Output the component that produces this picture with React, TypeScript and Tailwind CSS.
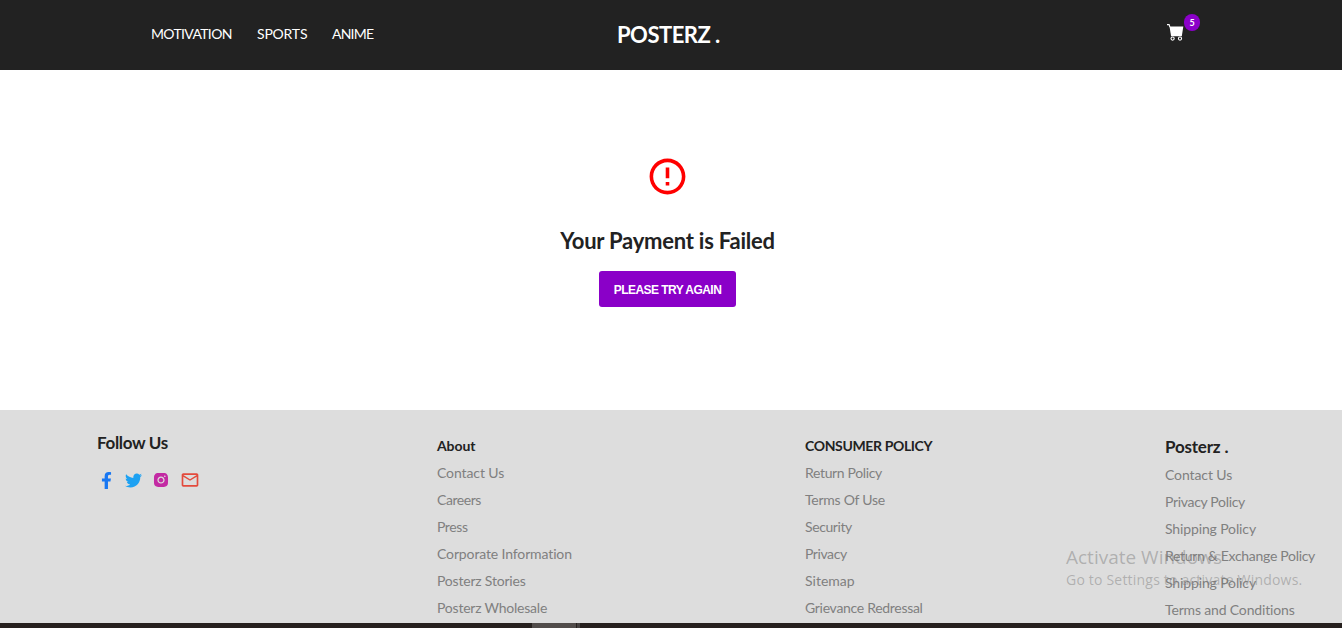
import { FaFacebookF, FaTwitter } from "react-icons/fa";
import { AiFillInstagram } from "react-icons/ai";
import { MdErrorOutline, MdMailOutline } from "react-icons/md";

type Item = { label: string; tracking: string };

const about: Item[] = [
  { label: "Contact Us", tracking: "tracking-[-0.1px]" },
  { label: "Careers", tracking: "tracking-[-0.45px]" },
  { label: "Press", tracking: "tracking-[-0.4px]" },
  { label: "Corporate Information", tracking: "tracking-[-0.13px]" },
  { label: "Posterz Stories", tracking: "tracking-[-0.2px]" },
  { label: "Posterz Wholesale", tracking: "tracking-[-0.22px]" },
];
const policy: Item[] = [
  { label: "Return Policy", tracking: "tracking-[-0.35px]" },
  { label: "Terms Of Use", tracking: "tracking-[-0.25px]" },
  { label: "Security", tracking: "tracking-[-0.4px]" },
  { label: "Privacy", tracking: "tracking-[-0.42px]" },
  { label: "Sitemap", tracking: "tracking-[0px]" },
  { label: "Grievance Redressal", tracking: "tracking-[-0.3px]" },
];
const posterz: Item[] = [
  { label: "Contact Us", tracking: "tracking-[-0.1px]" },
  { label: "Privacy Policy", tracking: "tracking-[-0.32px]" },
  { label: "Shipping Policy", tracking: "tracking-[-0.13px]" },
  { label: "Return & Exchange Policy", tracking: "tracking-[-0.3px]" },
  { label: "Shipping Policy", tracking: "tracking-[-0.13px]" },
  { label: "Terms and Conditions", tracking: "tracking-[-0.16px]" },
];

function Links({ items }: { items: Item[] }) {
  return (
    <ul>
      {items.map((item, i) => (
        <li key={i} className="h-[27px] text-[14px] leading-[27px] text-[#808080]">
          <span className={item.tracking}>{item.label}</span>
        </li>
      ))}
    </ul>
  );
}

function CartIcon() {
  return (
    <svg width="17" height="18" viewBox="0 0 17 18" fill="none" stroke="currentColor">
      <path d="M0 .6h2.1l.8 2.4" strokeWidth="1.1" />
      <path d="M2.5 2.6h13.8l-1.5 9.6H4.1z" fill="currentColor" stroke="none" />
      <circle cx="5.6" cy="14.6" r="1.6" strokeWidth="1.1" />
      <circle cx="13" cy="14.6" r="1.6" strokeWidth="1.1" />
    </svg>
  );
}

export default function App() {
  return (
    <div className="relative flex h-[628px] w-[1342px] flex-col overflow-hidden bg-white font-[Lato,sans-serif] whitespace-nowrap text-[#222]">
      <header className="flex h-[70px] shrink-0 bg-[#222] text-white">
        <nav className="flex w-[617px] pl-[151px] text-[14px] leading-[68px]">
          <a className="w-[106px] tracking-[-0.65px]">MOTIVATION</a>
          <a className="w-[75px] tracking-[-0.2px]">SPORTS</a>
          <a className="tracking-[-0.8px]">ANIME</a>
        </nav>
        <h1 className="w-[550px] text-[22px] leading-[69px] font-bold tracking-[-0.5px]">POSTERZ .</h1>
        <div className="relative mt-6 h-[18px] w-[17px]">
          <CartIcon />
          <span className="absolute -top-[10px] left-[17px] h-[17px] w-4 rounded-full bg-[#8b00c9] text-center text-[9px] leading-[17px] font-bold">
            5
          </span>
        </div>
      </header>

      <main className="flex h-[340px] shrink-0 flex-col items-center pr-[7px]">
        <MdErrorOutline size={43} color="#ff0000" className="mt-[85px]" />
        <h2 className="mt-[25px] h-[36px] text-[22px] leading-[36px] font-bold tracking-[-0.23px]">Your Payment is Failed</h2>
        <button className="mt-[12px] h-9 w-[137px] rounded-[3px] bg-[#8a00c8] pt-px font-['Liberation_Sans',Arial,sans-serif] text-[12px] font-bold tracking-[-0.54px] text-white">
          PLEASE TRY AGAIN
        </button>
      </main>

      <footer className="flex h-[213px] shrink-0 bg-[#ddd]">
        <div className="w-[437px] pt-[19px] pl-[97px]">
          <h3 className="text-[17px] leading-[27px] font-bold tracking-[-0.33px]">Follow Us</h3>
          <div className="mt-[14px] flex h-5 items-center">
            <FaFacebookF size={17} color="#1877f2" className="ml-px" />
            <FaTwitter size={17} color="#1da1f2" className="ml-[10px]" />
            <AiFillInstagram size={18} color="#c32aa3" className="ml-[10px]" />
            <MdMailOutline size={20} color="#e34a3c" className="ml-[9.5px]" />
          </div>
        </div>
        <div className="w-[368px] pt-[22px]">
          <h3 className="text-[14px] leading-[27px] font-bold tracking-[-0.1px]">About</h3>
          <Links items={about} />
        </div>
        <div className="w-[360px] pt-[22px]">
          <h3 className="text-[14px] leading-[27px] font-bold tracking-[-0.36px]">CONSUMER POLICY</h3>
          <Links items={policy} />
        </div>
        <div className="pt-[22px]">
          <h3 className="h-[29px] text-[17px] leading-[29px] font-bold tracking-[-0.2px]">Posterz .</h3>
          <Links items={posterz} />
        </div>
      </footer>

      <div className="flex h-[5px] shrink-0 bg-[#26201e]">
        <div className="ml-[532px] h-full w-[44px] bg-[#514c4a]" />
        <div className="h-full w-[4px] border-l border-[#26201e] bg-[#45403f]" />
      </div>

      <div className="absolute top-[543px] left-[1066px] font-['Open_Sans',sans-serif] text-[#777]/45">
        <p className="text-[19px] leading-[28px]">Activate Windows</p>
        <p className="text-[14px] leading-[18px] tracking-[0.2px]">Go to Settings to activate Windows.</p>
      </div>
    </div>
  );
}
